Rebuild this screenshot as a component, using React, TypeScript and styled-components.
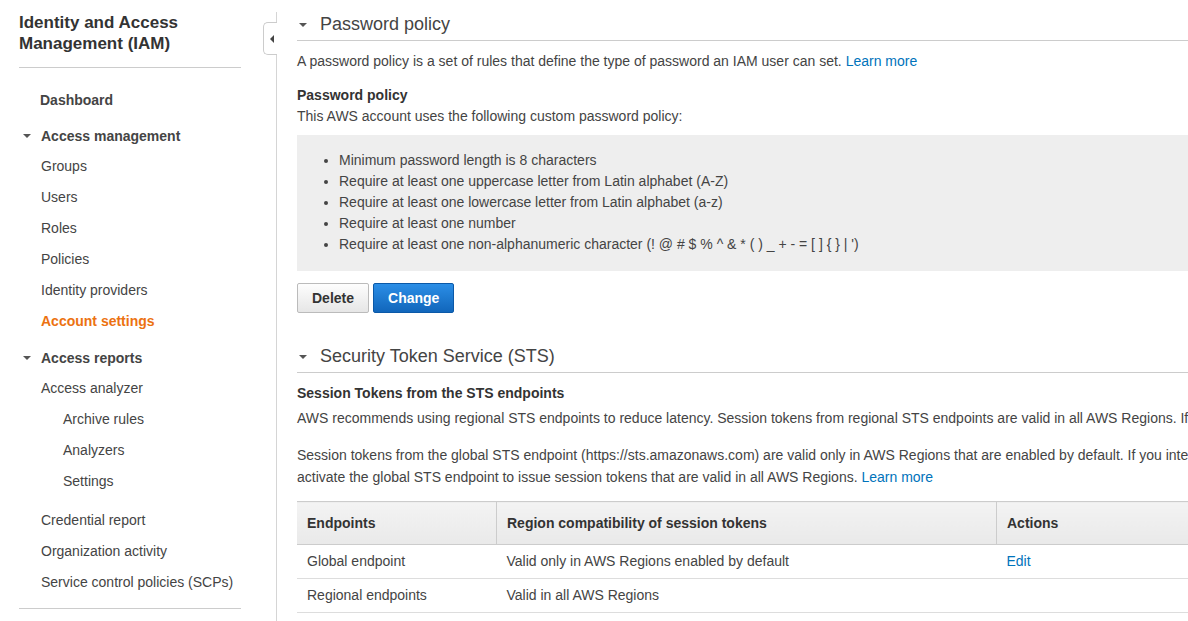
import styled, { createGlobalStyle } from "styled-components";

const GlobalStyle = createGlobalStyle`
  body {
    margin: 0;
    overflow: hidden;
    background: #fff;
    font-family: "Liberation Sans", Arial, sans-serif;
    font-size: 14px;
    color: #444;
  }
`;

const Page = styled.div`
  display: flex;
  align-items: flex-start;
  height: 100vh;
`;

const Sidebar = styled.nav`
  position: relative;
  flex: 0 0 277px;
  margin-top: 12px;
  height: calc(100vh - 12px);
  padding: 0 35px 0 19px;
  box-sizing: border-box;
  border-right: 1px solid #d5d5d5;
`;

const SideTitle = styled.h1`
  margin: 0 0 13px;
  font-size: 17px;
  line-height: 21px;
  font-weight: bold;
  color: #333;
`;

const Divider = styled.hr`
  margin: 0;
  border: 0;
  border-top: 1px solid #ccc;
`;

const NavList = styled.div<{ $top?: number; $bottom?: number }>`
  display: flex;
  flex-direction: column;
  margin-top: ${({ $top }) => $top ?? 0}px;
  margin-bottom: ${({ $bottom }) => $bottom ?? 0}px;
`;

const NavItem = styled.a<{ $indent?: number; $active?: boolean; $bold?: boolean }>`
  display: block;
  height: 31px;
  line-height: 31px;
  padding-left: ${({ $indent }) => $indent ?? 22}px;
  color: ${({ $active }) => ($active ? "#ec7211" : "#444")};
  font-weight: ${({ $active, $bold }) => ($active || $bold ? "bold" : "normal")};
  text-decoration: none;
  white-space: nowrap;
`;

const GroupHeader = styled.div<{ $top?: number }>`
  display: flex;
  align-items: center;
  height: 30px;
  margin-top: ${({ $top }) => $top ?? 5}px;
  padding-left: 4px;
  font-weight: bold;
  color: #444;
`;

const Caret = styled.span`
  display: inline-block;
  width: 0;
  height: 0;
  border-left: 4px solid transparent;
  border-right: 4px solid transparent;
  border-top: 4px solid #555;
  margin-right: 10px;
`;

const CollapseTab = styled.button`
  position: absolute;
  top: 10px;
  right: -1px;
  width: 14px;
  height: 33px;
  padding: 0;
  border: 1px solid #ccc;
  border-right: 0;
  border-radius: 5px 0 0 5px;
  background: #fff;
  display: flex;
  align-items: center;
  justify-content: center;
  cursor: pointer;

  &::after {
    content: "";
    border-top: 4px solid transparent;
    border-bottom: 4px solid transparent;
    border-right: 4px solid #444;
    margin-left: 2px;
  }
`;

const Main = styled.main`
  flex: 0 0 1540px;
  padding-left: 20px;
`;

const SectionHeader = styled.h2<{ $top: number }>`
  display: flex;
  align-items: center;
  margin: ${({ $top }) => $top}px 0 0;
  height: 31px;
  padding-left: 2px;
  border-bottom: 1px solid #ccc;
  font-size: 18px;
  font-weight: normal;
  color: #444;

  ${Caret} {
    margin-right: 13px;
  }
`;

const Para = styled.p<{ $top: number; $lh?: number }>`
  margin: ${({ $top }) => $top}px 0 0;
  line-height: ${({ $lh }) => $lh ?? 21}px;
`;

const SubTitle = styled.h3<{ $top: number }>`
  margin: ${({ $top }) => $top}px 0 0;
  font-size: 14px;
  line-height: 21px;
  font-weight: bold;
  color: #333;
`;

const Link = styled.a`
  color: #0073bb;
  text-decoration: none;
`;

const PolicyBox = styled.div`
  margin-top: 8px;
  background: #eee;
  padding: 15px 0 16px;
`;

const RuleList = styled.ul`
  margin: 0;
  padding-left: 42px;
  line-height: 21px;
`;

const Actions = styled.div`
  display: flex;
  gap: 4px;
  margin-top: 12px;
`;

const Button = styled.button<{ $primary?: boolean }>`
  height: 30px;
  padding: 0 14px;
  border-radius: 2px;
  font-family: inherit;
  font-size: 14px;
  font-weight: bold;
  cursor: pointer;
  color: ${({ $primary }) => ($primary ? "#fff" : "#333")};
  border: 1px solid ${({ $primary }) => ($primary ? "#0b59a8" : "#bbb")};
  background: ${({ $primary }) =>
    $primary
      ? "linear-gradient(#2b8ee6, #1166bb)"
      : "linear-gradient(#fdfdfd, #e6e6e6)"};
`;

const Table = styled.table`
  margin-top: 13px;
  width: 100%;
  border-collapse: collapse;
  line-height: 21px;

  th {
    height: 42px;
    padding: 0 10px;
    text-align: left;
    font-weight: bold;
    color: #333;
    background: linear-gradient(#f3f3f3, #e9e9e9);
    border-top: 1px solid #ccc;
    border-bottom: 1px solid #ccc;
    border-left: 1px solid #ccc;
  }

  th:first-child {
    border-left: 0;
  }

  td {
    height: 33px;
    padding: 0 10px;
    border-bottom: 1px solid #ddd;
  }
`;

const rules = [
  "Minimum password length is 8 characters",
  "Require at least one uppercase letter from Latin alphabet (A-Z)",
  "Require at least one lowercase letter from Latin alphabet (a-z)",
  "Require at least one number",
  "Require at least one non-alphanumeric character (! @ # $ % ^ & * ( ) _ + - = [ ] { } | ')",
];

const App = () => {
  return (
    <>
      <GlobalStyle />
      <Page>
        <Sidebar>
          <SideTitle>
            Identity and Access
            <br />
            Management (IAM)
          </SideTitle>
          <Divider />
          <NavList $top={17}>
            <NavItem $bold $indent={21}>Dashboard</NavItem>
          </NavList>
          <GroupHeader>
            <Caret />
            Access management
          </GroupHeader>
          <NavList>
            <NavItem>Groups</NavItem>
            <NavItem>Users</NavItem>
            <NavItem>Roles</NavItem>
            <NavItem>Policies</NavItem>
            <NavItem>Identity providers</NavItem>
            <NavItem $active>Account settings</NavItem>
          </NavList>
          <GroupHeader $top={6}>
            <Caret />
            Access reports
          </GroupHeader>
          <NavList $bottom={8}>
            <NavItem>Access analyzer</NavItem>
            <NavItem $indent={44}>Archive rules</NavItem>
            <NavItem $indent={44}>Analyzers</NavItem>
            <NavItem $indent={44}>Settings</NavItem>
          </NavList>
          <NavList $bottom={10}>
            <NavItem>Credential report</NavItem>
            <NavItem>Organization activity</NavItem>
            <NavItem>Service control policies (SCPs)</NavItem>
          </NavList>
          <Divider />
          <CollapseTab aria-label="Collapse" />
        </Sidebar>

        <Main>
          <SectionHeader $top={9}>
            <Caret />
            Password policy
          </SectionHeader>
          <Para $top={10}>
            A password policy is a set of rules that define the type of password an IAM user can set.{" "}
            <Link>Learn more</Link>
          </Para>
          <SubTitle $top={13}>Password policy</SubTitle>
          <Para $top={0}>This AWS account uses the following custom password policy:</Para>
          <PolicyBox>
            <RuleList>
              {rules.map((r) => (
                <li key={r}>{r}</li>
              ))}
            </RuleList>
          </PolicyBox>
          <Actions>
            <Button>Delete</Button>
            <Button $primary>Change</Button>
          </Actions>

          <SectionHeader $top={28}>
            <Caret />
            Security Token Service (STS)
          </SectionHeader>
          <SubTitle $top={10}>Session Tokens from the STS endpoints</SubTitle>
          <Para $top={4}>
            AWS recommends using regional STS endpoints to reduce latency. Session tokens from regional STS
            endpoints are valid in all AWS Regions. If you use regional STS endpoints, no action is required.
          </Para>
          <Para $top={15} $lh={22}>
            Session tokens from the global STS endpoint (https://sts.amazonaws.com) are valid only in AWS
            Regions that are enabled by default. If you intend to enable a Region for your account, you can
            use session tokens from regional STS endpoints or
            <br />
            activate the global STS endpoint to issue session tokens that are valid in all AWS Regions.{" "}
            <Link>Learn more</Link>
          </Para>
          <Table>
            <thead>
              <tr>
                <th style={{ width: 179 }}>Endpoints</th>
                <th style={{ width: 479 }}>Region compatibility of session tokens</th>
                <th>Actions</th>
              </tr>
            </thead>
            <tbody>
              <tr>
                <td>Global endpoint</td>
                <td>Valid only in AWS Regions enabled by default</td>
                <td>
                  <Link>Edit</Link>
                </td>
              </tr>
              <tr>
                <td>Regional endpoints</td>
                <td>Valid in all AWS Regions</td>
                <td />
              </tr>
            </tbody>
          </Table>
        </Main>
      </Page>
    </>
  );
};

export default App;
